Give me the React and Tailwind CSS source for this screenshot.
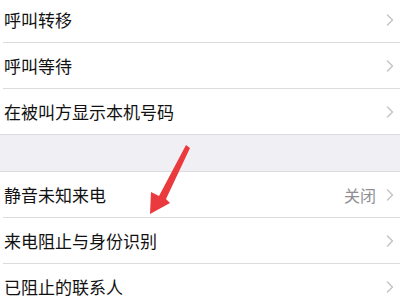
import { ChevronRight } from 'lucide-react';

const font = { fontFamily: '"Noto Sans CJK SC", "Noto Sans", sans-serif' };

function Row({ label, value }) {
  return (
    <div className="flex h-[45px] items-center bg-white pl-[4px]">
      <span className="flex-1 text-[17px] leading-none text-[#111]">{label}</span>
      {value && <span className="mr-[4px] text-[16px] leading-none text-[#8e8e93]">{value}</span>}
      <ChevronRight className="h-5 w-5 text-[#c4c4c8]" strokeWidth={1.7} />
    </div>
  );
}

function Sep() {
  return <div className="ml-[3px] h-px bg-[#dcdce0]" />;
}

export default function App() {
  return (
    <div className="relative h-[300px] w-[400px] overflow-hidden bg-white" style={font}>
      <div className="-mt-[3px] flex flex-col">
        <Row label="呼叫转移" />
        <Sep />
        <Row label="呼叫等待" />
        <Sep />
        <Row label="在被叫方显示本机号码" />
        <div className="h-px bg-[#dcdce0]" />
        <div className="h-[36px] bg-[#efeff4]" />
        <div className="h-px bg-[#dcdce0]" />
        <Row label="静音未知来电" value="关闭" />
        <Sep />
        <Row label="来电阻止与身份识别" />
        <Sep />
        <Row label="已阻止的联系人" />
      </div>
      <svg className="absolute left-0 top-0" width="400" height="300" viewBox="0 0 400 300">
        <polygon
          points="186,145 190,148 166,199 170,203 150,214 151,192 159,196"
          fill="#ea3a3e"
        />
      </svg>
    </div>
  );
}
